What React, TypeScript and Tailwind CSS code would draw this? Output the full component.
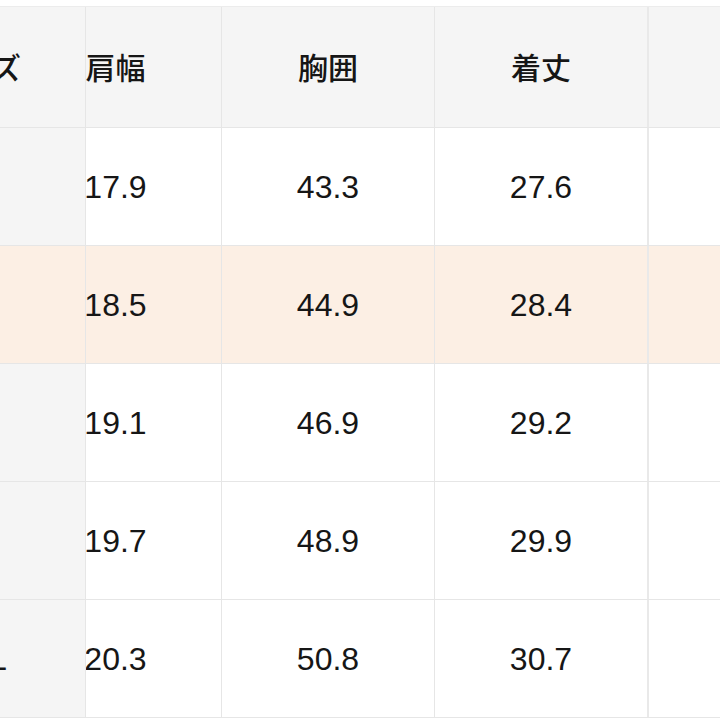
const headers = ["サイズ", "肩幅", "胸囲", "着丈", "袖丈"];

const rows = [
  { size: "S", values: ["17.9", "43.3", "27.6", "100.5"] },
  { size: "M", values: ["18.5", "44.9", "28.4", "102.0"], active: true },
  { size: "L", values: ["19.1", "46.9", "29.2", "104.5"] },
  { size: "XL", values: ["19.7", "48.9", "29.9", "106.0"] },
  { size: "XXL", values: ["20.3", "50.8", "30.7", "108.5"] },
];

const font = "font-['Liberation_Sans','Noto_Sans_CJK_JP',sans-serif]";

// the table is scrolled sideways: the sticky first column and the 肩幅 column are only partly visible
function Row({
  cells,
  bg,
  stickyBg,
  height,
}: {
  cells: string[];
  bg: string;
  stickyBg: string;
  height: string;
}) {
  return (
    <div className={`flex ${height} border-b border-[#e6e6e6]`}>
      <div className={`w-[86px] shrink-0 overflow-hidden border-r border-[#e6e6e6] ${stickyBg}`}>
        <div className="ml-[-132px] flex h-full w-[217px] items-center justify-center">{cells[0]}</div>
      </div>
      <div className={`w-[136px] shrink-0 overflow-hidden border-r border-[#e6e6e6] ${bg}`}>
        <div className="ml-[-77px] flex h-full w-[213px] items-center justify-center">{cells[1]}</div>
      </div>
      <div className={`flex w-[213px] shrink-0 items-center justify-center border-r border-[#e6e6e6] ${bg}`}>
        {cells[2]}
      </div>
      <div className={`flex w-[214px] shrink-0 items-center justify-center border-r-2 border-[#e9e9e9] ${bg}`}>
        {cells[3]}
      </div>
      <div className={`flex w-[220px] shrink-0 items-center justify-center border-r border-[#e6e6e6] ${bg}`}>
        {cells[4]}
      </div>
    </div>
  );
}

export default function App() {
  return (
    <div className={`h-[720px] w-[720px] overflow-hidden bg-white pt-[6px] text-[32px] text-[#161616] ${font}`}>
      <div className="w-[870px] border-t border-[#ececec]">
        <Row
          cells={headers}
          bg="bg-[#f5f5f5] text-[30px] font-medium pt-[2px]"
          stickyBg="bg-[#f5f5f5] text-[30px] font-medium pt-[2px]"
          height="h-[121px]"
        />
        {rows.map((r) => (
          <Row
            key={r.size}
            cells={[r.size, ...r.values]}
            bg={r.active ? "bg-[#fcefe4]" : "bg-white"}
            stickyBg={r.active ? "bg-[#fcefe4]" : "bg-[#f5f5f5]"}
            height="h-[118px]"
          />
        ))}
      </div>
    </div>
  );
}
